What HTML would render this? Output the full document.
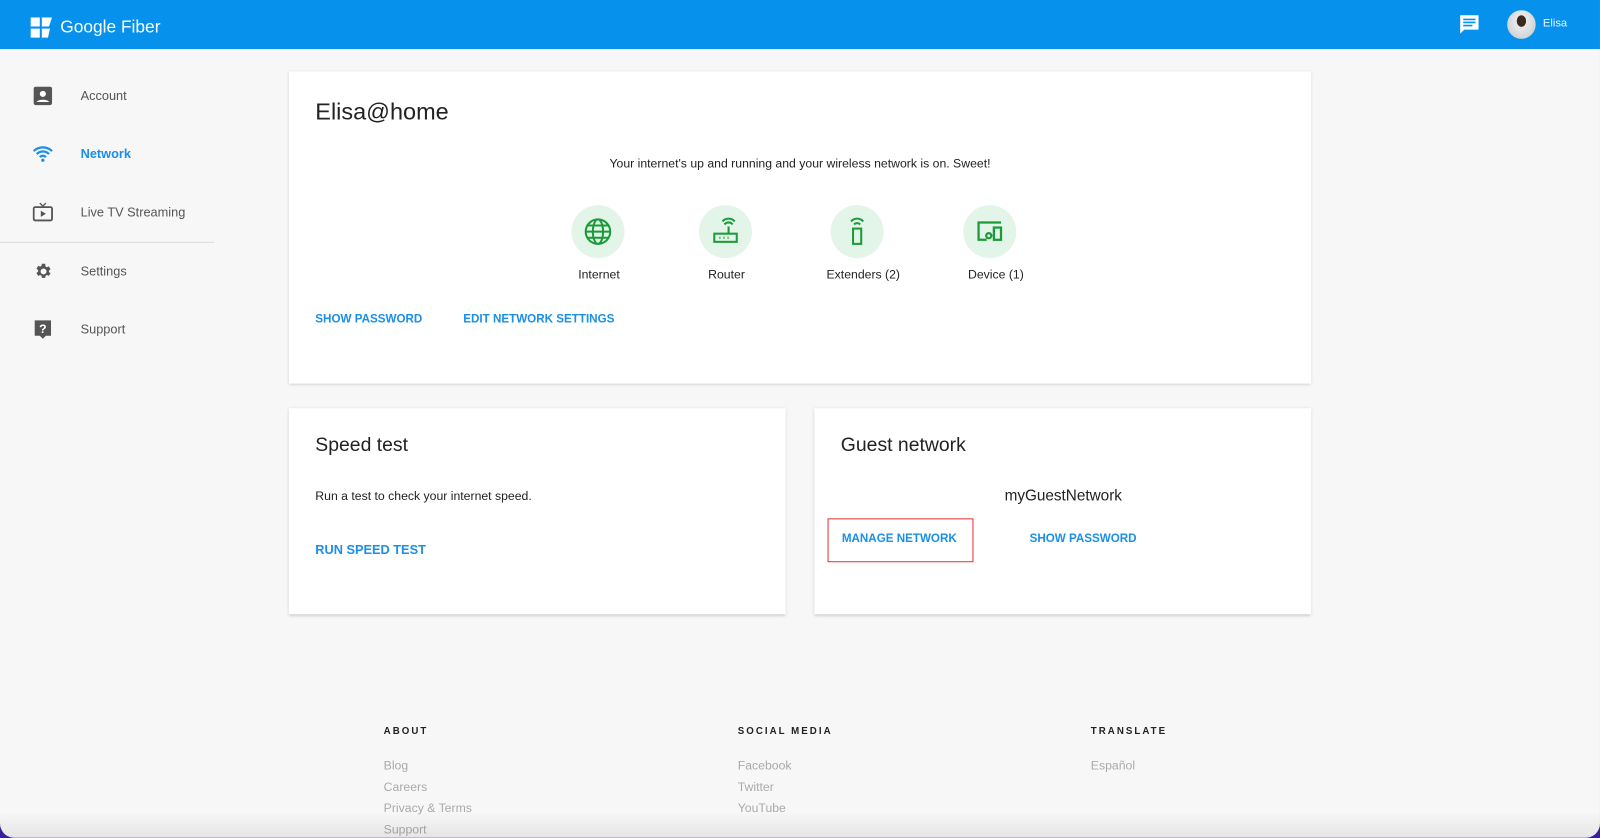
<!DOCTYPE html>
<html><head><meta charset="utf-8"><style>
html,body{margin:0;padding:0;width:1600px;height:838px;overflow:hidden;background:#3a1f9a;}
#s{position:absolute;left:0;top:0;width:1568px;height:821px;transform:scale(1.0204);transform-origin:0 0;background:#f7f7f7;font-family:"Liberation Sans",Arial,sans-serif;border-radius:0 0 14px 14px;overflow:hidden}
.a{position:absolute;white-space:nowrap}
.hdr{position:absolute;left:0;top:0;width:1568px;height:48px;background:#0591ec}
.card{position:absolute;background:#fff;box-shadow:0 1px 3px rgba(0,0,0,.22)}
.nav{position:absolute;left:79px;font-size:12.5px;color:#555;transform:translateY(-50%)}
.ic{position:absolute;left:32px;width:20px;height:20px;transform:translateY(-50%)}
.lnk{color:#1a8fe8;font-weight:bold;font-size:11.4px;transform:translateY(-50%)}
.cir{position:absolute;width:52px;height:52px;border-radius:50%;background:#e3f5e8;transform:translate(-50%,-50%)}
.cir svg{position:absolute;left:12px;top:12px}
.lab{font-size:12px;color:#222;transform:translate(-50%,-50%)}
.fh{font-size:9.5px;font-weight:bold;letter-spacing:2px;color:#222;transform:translateY(-50%)}
.fl{font-size:12px;color:#aaa;transform:translateY(-50%)}
</style></head><body><div id="s">
<div class="hdr">
<svg class="a" style="left:30px;top:17px" width="21" height="20" viewBox="0 0 21 20"><path d="M0 0h9v9H0zM11 0h10l-3 9h-7zM0 11h9v9H0zM11 11h8l-2 9h-6z" fill="#fff"/></svg>
<div class="a" style="left:59px;top:17px;font-size:17px;color:#fff">Google Fiber</div>
<svg class="a" style="left:1429px;top:13px" width="22" height="22" viewBox="0 0 22 22"><path d="M2 2h18v14H6l-4 4z" fill="#fff"/><path d="M5 6h12M5 9h12M5 12h9" stroke="#0591ec" stroke-width="1.6"/></svg>
<div class="a" style="left:1477px;top:10px;width:28px;height:28px;border-radius:50%;background:radial-gradient(ellipse at 50% 38%,#3a2a22 0 22%,#e9e9e9 24%,#d6dadd 60%,#b9c2c8 100%)"></div>
<div class="a" style="left:1512px;top:17px;font-size:11px;color:#e8f3fd">Elisa</div>
</div>
<svg class="ic" style="top:94px" viewBox="0 0 20 20"><rect x="1" y="1" width="18" height="18" rx="2" fill="#555"/><circle cx="10" cy="8" r="3" fill="#fff"/><path d="M4 16c1-3 11-3 12 0z" fill="#fff"/></svg>
<div class="nav" style="top:94px">Account</div>
<svg class="ic" style="top:151px" viewBox="0 0 20 20"><path d="M1 7a13 13 0 0118 0M4 10a8.5 8.5 0 0112 0M7 13a4 4 0 016 0" stroke="#1a8fe8" stroke-width="2.2" fill="none"/><circle cx="10" cy="16" r="1.6" fill="#1a8fe8"/></svg>
<div class="nav" style="top:151px;color:#1a8fe8;font-weight:bold">Network</div>
<svg class="ic" style="top:208px" viewBox="0 0 20 20"><rect x="1" y="5" width="18" height="13" rx="1.5" stroke="#555" stroke-width="1.8" fill="none"/><path d="M7 1l3 3 3-3" stroke="#555" stroke-width="1.3" fill="none"/><path d="M8 8.5v6l5-3z" fill="#555"/></svg>
<div class="nav" style="top:208px">Live TV Streaming</div>
<div class="a" style="left:0;top:237px;width:210px;height:1px;background:#ddd"></div>
<svg class="ic" style="top:266px" viewBox="0 0 24 24"><path fill="#555" d="M19.1 12.9a7 7 0 000-1.8l2-1.6-2-3.4-2.4 1a7 7 0 00-1.6-.9L14.8 3h-4l-.4 2.5a7 7 0 00-1.5.9l-2.4-1-2 3.4 2 1.6a7 7 0 000 1.8l-2 1.6 2 3.4 2.4-1a7 7 0 001.5.9l.4 2.5h4l.4-2.5a7 7 0 001.5-.9l2.4 1 2-3.4zM12.8 15.5a3.5 3.5 0 110-7 3.5 3.5 0 010 7z"/></svg>
<div class="nav" style="top:266px">Settings</div>
<svg class="ic" style="top:323px" viewBox="0 0 20 20"><path d="M2 1h16v15h-5l-3 3-3-3H2z" fill="#555"/><text x="10" y="13.5" font-size="12" font-weight="bold" fill="#fff" text-anchor="middle" font-family="Liberation Sans">?</text></svg>
<div class="nav" style="top:323px">Support</div>

<div class="card" style="left:283px;top:70px;width:1002px;height:306px"></div>
<div class="a" style="left:309px;top:96px;font-size:23px;color:#222">Elisa@home</div>
<div class="a lab" style="left:784px;top:160px">Your internet's up and running and your wireless network is on. Sweet!</div>
<div class="cir" style="left:586px;top:227px"><svg width="28" height="28" viewBox="0 0 28 28" fill="none" stroke="#1b9a38" stroke-width="2"><circle cx="14" cy="14" r="12"/><ellipse cx="14" cy="14" rx="5" ry="12"/><path d="M2 14h24M4 8h20M4 20h20"/></svg></div>
<div class="cir" style="left:711px;top:227px"><svg width="28" height="28" viewBox="0 0 28 28" fill="none" stroke="#1b9a38" stroke-width="2"><rect x="3" y="16" width="22" height="8"/><path d="M17 16V9M13 7a5 5 0 018 0M11 4a8 8 0 0112 0"/><path d="M8 20h1M12 20h1M16 20h1" stroke-width="2.2"/></svg></div>
<div class="cir" style="left:840px;top:227px"><svg width="28" height="28" viewBox="0 0 28 28" fill="none" stroke="#1b9a38" stroke-width="2"><rect x="10" y="11" width="8" height="15"/><path d="M11 7a4 4 0 016 0M8 4a8 8 0 0112 0"/></svg></div>
<div class="cir" style="left:970px;top:227px"><svg width="28" height="28" viewBox="0 0 28 28" fill="none" stroke="#1b9a38" stroke-width="2.2"><path d="M11 22H3V5h22"/><rect x="18" y="10" width="7" height="12"/><circle cx="13" cy="18" r="2.5"/></svg></div>
<div class="a lab" style="left:587px;top:269px">Internet</div>
<div class="a lab" style="left:712px;top:269px">Router</div>
<div class="a lab" style="left:846px;top:269px">Extenders (2)</div>
<div class="a lab" style="left:976px;top:269px">Device (1)</div>
<div class="a lnk" style="left:309px;top:313px">SHOW PASSWORD</div>
<div class="a lnk" style="left:454px;top:313px">EDIT NETWORK SETTINGS</div>

<div class="card" style="left:283px;top:400px;width:487px;height:202px"></div>
<div class="a" style="left:309px;top:426px;font-size:19px;color:#222">Speed test</div>
<div class="a" style="left:309px;top:479px;font-size:12px;color:#222">Run a test to check your internet speed.</div>
<div class="a lnk" style="left:309px;top:539px;font-size:12.5px">RUN SPEED TEST</div>

<div class="card" style="left:798px;top:400px;width:487px;height:202px"></div>
<div class="a" style="left:824px;top:426px;font-size:19px;color:#222">Guest network</div>
<div class="a lab" style="left:1042px;top:486px;font-size:15px">myGuestNetwork</div>
<div class="a" style="left:811px;top:508px;width:141px;height:41px;border:1.5px solid #e83030"></div>
<div class="a lnk" style="left:825px;top:528px">MANAGE NETWORK</div>
<div class="a lnk" style="left:1009px;top:528px">SHOW PASSWORD</div>

<div class="a fh" style="left:376px;top:717px">ABOUT</div>
<div class="a fh" style="left:723px;top:717px">SOCIAL MEDIA</div>
<div class="a fh" style="left:1069px;top:717px">TRANSLATE</div>
<div class="a fl" style="left:376px;top:750px">Blog</div>
<div class="a fl" style="left:376px;top:771px">Careers</div>
<div class="a fl" style="left:376px;top:792px">Privacy &amp; Terms</div>
<div class="a fl" style="left:376px;top:813px">Support</div>
<div class="a fl" style="left:723px;top:750px">Facebook</div>
<div class="a fl" style="left:723px;top:771px">Twitter</div>
<div class="a fl" style="left:723px;top:792px">YouTube</div>
<div class="a fl" style="left:1069px;top:750px">Español</div>
<div class="a" style="left:0;top:795px;width:1568px;height:26px;background:linear-gradient(rgba(0,0,0,0),rgba(0,0,0,.07))"></div>
</div></body></html>
